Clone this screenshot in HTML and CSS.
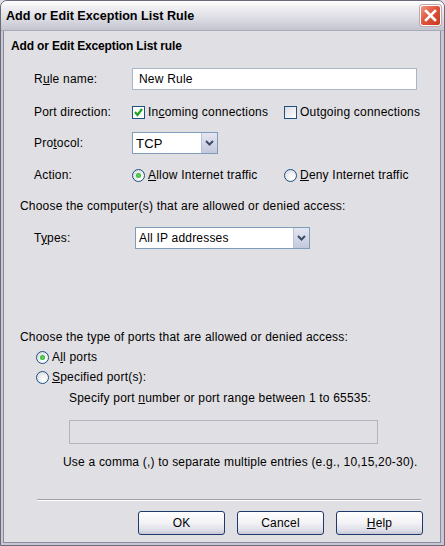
FILE: index.html
```html
<!DOCTYPE html>
<html>
<head>
<meta charset="utf-8">
<link rel="stylesheet" href="styles.css">
</head>
<body>
<div class="window">
  <div class="titlebar">
    <span class="title">Add or Edit Exception List Rule</span>
    <span class="close"><svg width="13" height="13" viewBox="0 0 13 13"><path d="M2 2 L11 11 M11 2 L2 11" stroke="#fff" stroke-width="2.6" stroke-linecap="square"/></svg></span>
  </div>
  <div class="client">
    <div class="header">Add or Edit Exception List rule</div>

    <div class="row r-name">
      <span class="label">R<u>u</u>le name:</span>
      <div class="textfield">New Rule</div>
    </div>

    <div class="row r-dir">
      <span class="label">Port direction:</span>
      <span class="opt opt-in"><span class="check on"><svg width="11" height="11" viewBox="0 0 11 11"><path d="M2 5 L4.5 8 L9 2" stroke="#21a121" stroke-width="2.2" fill="none"/></svg></span>In<u>c</u>oming connections</span>
      <span class="opt"><span class="check"></span>Out<u>g</u>oing connections</span>
    </div>

    <div class="row r-proto">
      <span class="label">Pro<u>t</u>ocol:</span>
      <div class="select sel-proto"><span class="sel-text">TCP</span><span class="arrow"><svg width="9" height="6" viewBox="0 0 9 6"><path d="M1 1 L4.5 4.5 L8 1" stroke="#3d4b6a" stroke-width="2" fill="none"/></svg></span></div>
    </div>

    <div class="row r-action">
      <span class="label">Action:</span>
      <span class="opt opt-in"><span class="radio on"><span class="dot"></span></span><u>A</u>llow Internet traffic</span>
      <span class="opt"><span class="radio"></span><u>D</u>eny Internet traffic</span>
    </div>

    <div class="section s-comp">Choose the computer(s) that are allowed or denied access:</div>

    <div class="row r-types">
      <span class="label label-types">T<u>y</u>pes:</span>
      <div class="select sel-types"><span class="sel-text">All IP addresses</span><span class="arrow"><svg width="9" height="6" viewBox="0 0 9 6"><path d="M1 1 L4.5 4.5 L8 1" stroke="#3d4b6a" stroke-width="2" fill="none"/></svg></span></div>
    </div>

    <div class="section s-ports">Choose the type of ports that are allowed or denied access:</div>
    <div class="radio-line l-all"><span class="radio on"><span class="dot"></span></span>A<u>l</u>l ports</div>
    <div class="radio-line l-spec"><span class="radio"></span><u>S</u>pecified port(s):</div>
    <div class="note n-spec">Specify port <u>n</u>umber or port range between 1 to 65535:</div>
    <div class="portfield"></div>
    <div class="note n-comma">Use a comma (,) to separate multiple entries (e.g., 10,15,20-30).</div>

    <div class="separator"></div>
    <div class="buttons">
      <button class="btn">OK</button>
      <button class="btn">Cancel</button>
      <button class="btn"><u>H</u>elp</button>
    </div>
  </div>
</div>
</body>
</html>
```

FILE: styles.css
```css
html, body {
  margin: 0;
  padding: 0;
  background: #e0dfe3;
}
body {
  font-family: "Liberation Sans", Arial, sans-serif;
  font-size: 12px;
  letter-spacing: 0.2px;
  color: #000;
}
.window {
  width: 445px;
  height: 546px;
  box-sizing: border-box;
  border: 1px solid #6a6a78;
  border-radius: 7px 7px 0 0;
  background: #c8c8d4;
  display: flex;
  flex-direction: column;
  overflow: hidden;
}
.titlebar {
  height: 29px;
  flex: none;
  display: flex;
  align-items: center;
  justify-content: space-between;
  padding: 0 3px 0 5px;
  background: linear-gradient(#ffffff 0%, #eeeef2 25%, #dcdce4 60%, #c4c4d0 100%);
  border-bottom: 1px solid #a8a8b8;
}
.title {
  font-weight: bold;
  font-size: 12.6px;
  color: #000;
  letter-spacing: 0;
  padding-top: 1px;
}
.close {
  width: 21px;
  height: 21px;
  box-sizing: border-box;
  border: 1px solid #fff;
  border-radius: 3px;
  background: linear-gradient(135deg, #f09a86 0%, #e0553c 45%, #c8381e 100%);
  display: flex;
  align-items: center;
  justify-content: center;
  box-shadow: 0 0 0 1px #c0a8a8;
}
.client {
  flex: 1;
  margin: 0 3px 2px 2px;
  background: #e0dfe3;
  border: 1px solid #8a8a9c;
  border-top: none;
  display: flex;
  flex-direction: column;
  position: relative;
}
.header {
  font-weight: bold;
  letter-spacing: -0.15px;
  height: 16px;
  line-height: 16px;
  margin: 7px 0 0 7px;
}
.row {
  display: flex;
  align-items: center;
  padding-left: 30px;
}
.label {
  width: 98px;
  flex: none;
}
.label-types { width: 101px; }
.r-name { margin-top: 14px; height: 22px; }
.textfield {
  width: 285px;
  height: 22px;
  box-sizing: border-box;
  border: 1px solid #a9b6c8;
  background: #fff;
  padding: 0 6px;
  line-height: 20px;
}
.r-dir { margin-top: 14px; height: 16px; }
.opt {
  display: flex;
  align-items: center;
}
.opt-in { width: 152px; }
.check {
  width: 13px;
  height: 13px;
  box-sizing: border-box;
  border: 1px solid #1c5180;
  background: linear-gradient(135deg, #dcdce4 0%, #f4f4f6 70%, #ffffff 100%);
  margin-right: 3px;
  display: flex;
  align-items: center;
  justify-content: center;
}
.check.on { background: #fff; }
.r-proto { margin-top: 12px; height: 22px; }
.select {
  height: 22px;
  box-sizing: border-box;
  border: 1px solid #7f9db9;
  background: #fff;
  display: flex;
  align-items: center;
  justify-content: space-between;
}
.sel-proto { width: 86px; }
.sel-types { width: 175px; }
.sel-text { padding-left: 3px; }
.sel-proto .sel-text { font-size: 13px; }
.arrow {
  width: 16px;
  height: 20px;
  box-sizing: border-box;
  border-left: 1px solid #b8c4dc;
  background: linear-gradient(#e4e6f0, #c4c8dc);
  display: flex;
  align-items: center;
  justify-content: center;
}
.r-action { margin-top: 13px; height: 16px; }
.radio {
  width: 13px;
  height: 13px;
  box-sizing: border-box;
  border: 1px solid #1c5180;
  border-radius: 50%;
  background: radial-gradient(circle at 65% 70%, #ffffff 0%, #f2f2f4 40%, #cfd0d8 100%);
  margin-right: 3px;
  display: flex;
  align-items: center;
  justify-content: center;
  flex: none;
}
.radio .dot {
  width: 5px;
  height: 5px;
  border-radius: 50%;
  background: radial-gradient(#5ee05e, #1f9f1f);
}
.section {
  height: 16px;
  line-height: 16px;
  padding-left: 16px;
}
.s-comp { margin-top: 15px; }
.r-types { margin-top: 13px; height: 22px; }
.s-ports { margin-top: 80px; }
.radio-line {
  display: flex;
  align-items: center;
  height: 16px;
  padding-left: 32px;
}
.l-all { margin-top: 4px; }
.l-spec { margin-top: 4px; }
.note {
  height: 16px;
  line-height: 16px;
}
.n-spec { margin-top: 5px; padding-left: 65px; }
.portfield {
  margin: 14px 0 0 65px;
  width: 309px;
  height: 24px;
  box-sizing: border-box;
  border: 1px solid #b4b4c0;
  background: #e0dfe3;
}
.n-comma { margin-top: 10px; padding-left: 59px; }
.separator {
  margin: 29px 0 0 33px;
  width: 384px;
  height: 1px;
  background: #a0a0ac;
  border-bottom: 1px solid #ffffff;
}
.buttons {
  display: flex;
  gap: 12px;
  margin: 10px 0 0 134px;
}
.btn {
  width: 87px;
  height: 24px;
  box-sizing: border-box;
  border: 1px solid #1e3a6a;
  border-radius: 3px;
  background: linear-gradient(#ffffff 0%, #f2f2f6 50%, #dcdce6 85%, #c6c6d6 100%);
  font-family: "Liberation Sans", Arial, sans-serif;
  font-size: 12px;
  letter-spacing: 0.2px;
  color: #000;
  padding: 0;
}
```
